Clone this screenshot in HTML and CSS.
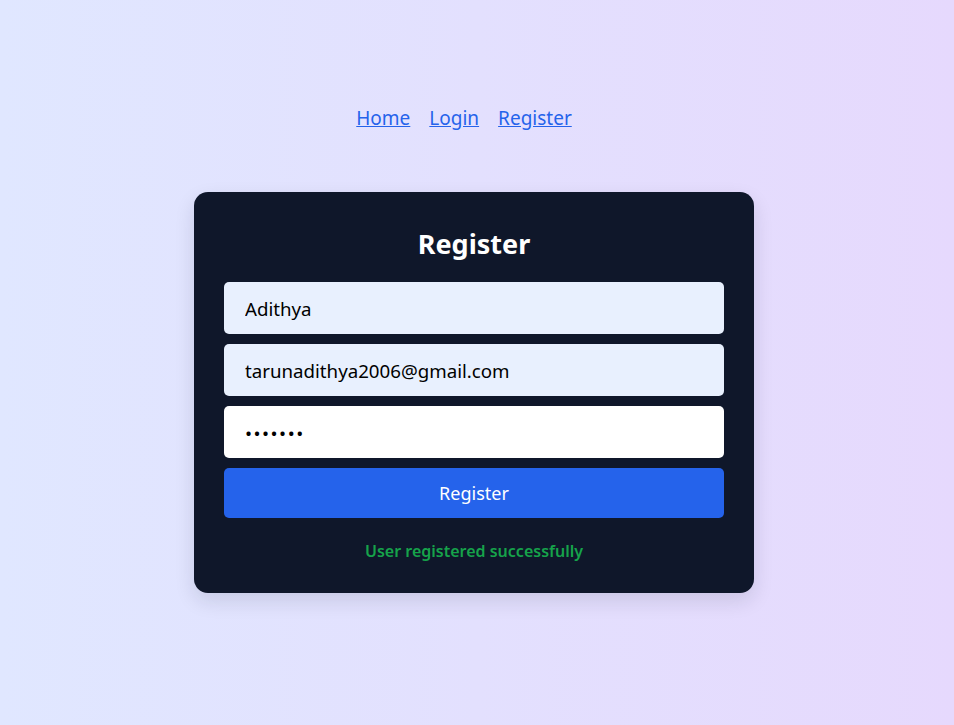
FILE: index.html
```html
<!DOCTYPE html>
<html>
<head>
<meta charset="utf-8">
<link rel="stylesheet" href="styles.css">
</head>
<body>
<nav class="nav">
  <a href="#">Home</a>
  <a href="#">Login</a>
  <a href="#">Register</a>
</nav>
<main class="wrap">
  <form class="card">
    <h2 class="title">Register</h2>
    <input class="field filled" type="text" value="Adithya">
    <input class="field filled" type="email" value="tarunadithya2006@gmail.com">
    <input class="field pass" type="password" value="1234567">
    <button class="btn" type="button">Register</button>
    <p class="msg">User registered successfully</p>
  </form>
</main>
</body>
</html>
```
FILE: styles.css
```css
html, body { height: 100%; }
body {
  margin: 0;
  font-family: "Noto Sans", "Open Sans", sans-serif;
  background: linear-gradient(to right, #e0e7ff, #e6d9fd);
}
.nav {
  display: flex;
  justify-content: center;
  gap: 19px;
  padding-top: 104px;
  padding-right: 26px;
  font-size: 19px;
  line-height: 28px;
}
.nav a { color: #2563eb; }
.wrap {
  display: flex;
  justify-content: center;
  margin-top: 60px;
  padding-right: 6px;
}
.card {
  width: 500px;
  padding: 30px;
  background: #0f172a;
  border-radius: 14px;
  box-shadow: 0 8px 20px rgba(15, 23, 42, 0.12);
  display: flex;
  flex-direction: column;
  gap: 10px;
}
.title {
  margin: 2px 0 8px;
  color: #fff;
  text-align: center;
  font-size: 27px;
  line-height: 40px;
  font-weight: 700;
}
.field {
  box-sizing: border-box;
  height: 52px;
  border: none;
  border-radius: 5px;
  padding: 0 21px;
  font-family: inherit;
  font-size: 18.7px;
  color: #000;
  background: #fff;
  outline: none;
}
.field.filled { background: #e8f0fe; }
.field.pass { letter-spacing: 1.5px; }
.btn {
  height: 50px;
  border: none;
  border-radius: 5px;
  background: #2563eb;
  color: #fff;
  font-family: inherit;
  font-size: 18px;
}
.msg {
  margin: 11px 0 0;
  text-align: center;
  color: #16a34a;
  font-weight: 600;
  font-size: 16px;
  line-height: 24px;
}
```
